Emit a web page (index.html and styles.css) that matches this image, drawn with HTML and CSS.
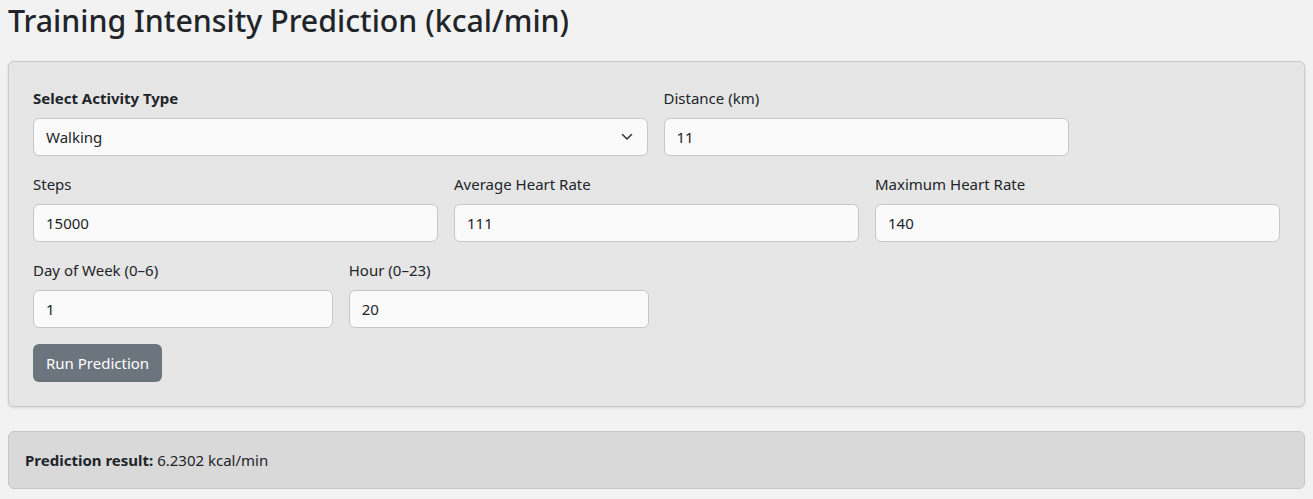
FILE: index.html
```html
<!DOCTYPE html>
<html lang="en">
<head>
<meta charset="utf-8">
<title>Training Intensity Prediction</title>
<link rel="stylesheet" href="styles.css">
</head>
<body>
<h1 class="title">Training Intensity Prediction (kcal/min)</h1>
<form class="card">
  <div class="row">
    <div class="field w-half">
      <label class="label bold">Select Activity Type</label>
      <div class="select">
        <span>Walking</span>
        <svg class="chev" width="12" height="8" viewBox="0 0 12 8"><path d="M1.5 1.5 L6 6 L10.5 1.5" fill="none" stroke="#343a40" stroke-width="1.6" stroke-linecap="round" stroke-linejoin="round"/></svg>
      </div>
    </div>
    <div class="field w-third">
      <label class="label">Distance (km)</label>
      <div class="input">11</div>
    </div>
  </div>
  <div class="row">
    <div class="field w-third">
      <label class="label">Steps</label>
      <div class="input">15000</div>
    </div>
    <div class="field w-third">
      <label class="label">Average Heart Rate</label>
      <div class="input">111</div>
    </div>
    <div class="field w-third">
      <label class="label">Maximum Heart Rate</label>
      <div class="input">140</div>
    </div>
  </div>
  <div class="row">
    <div class="field w-quarter">
      <label class="label">Day of Week (0–6)</label>
      <div class="input">1</div>
    </div>
    <div class="field w-quarter">
      <label class="label">Hour (0–23)</label>
      <div class="input">20</div>
    </div>
  </div>
  <div class="actions">
    <button type="button" class="btn">Run Prediction</button>
  </div>
</form>
<div class="result"><strong>Prediction result:</strong> 6.2302 kcal/min</div>
</body>
</html>
```
FILE: styles.css
```css
* { box-sizing: border-box; }
body {
  margin: 0;
  padding: 0 8px;
  background: #f2f2f2;
  color: #212529;
  font-family: "Noto Sans", "Open Sans", sans-serif;
  font-size: 15px;
  line-height: 24px;
}
.title {
  margin: 0 0 21px;
  padding-top: 2px;
  font-size: 30.3px;
  font-weight: 500;
  line-height: 38px;
}
.card {
  background: #e6e6e6;
  border: 1px solid #c9c9c9;
  border-radius: 6px;
  box-shadow: 0 1px 3px rgba(0,0,0,0.12);
  padding: 24px;
  display: flex;
  flex-direction: column;
  gap: 16px;
}
.row {
  display: flex;
  gap: 16px;
}
.field { display: flex; flex-direction: column; }
.w-half { width: calc((100% - 48px) / 2 + 15px); }
.w-third { width: calc((100% - 32px) / 3); }
.w-quarter { width: calc((100% - 48px) / 4); }
.label { margin-bottom: 8px; }
.bold { font-weight: 700; }
.input, .select {
  height: 38px;
  background: #fafafa;
  border: 1px solid #c6c6c6;
  border-radius: 6px;
  padding: 6px 12px;
  line-height: 24px;
}
.select {
  display: flex;
  align-items: center;
  justify-content: space-between;
  padding-right: 14px;
}
.chev { display: block; }
.actions { display: flex; }
.btn {
  height: 38px;
  padding: 6px 13px;
  border: 0;
  border-radius: 6px;
  background: #6c757d;
  color: #fff;
  font: inherit;
  line-height: 24px;
}
.result {
  margin-top: 24px;
  background: #d9d9d9;
  border: 1px solid #c6c6c6;
  border-radius: 6px;
  padding: 16px;
  height: 58px;
  line-height: 24px;
}
```
